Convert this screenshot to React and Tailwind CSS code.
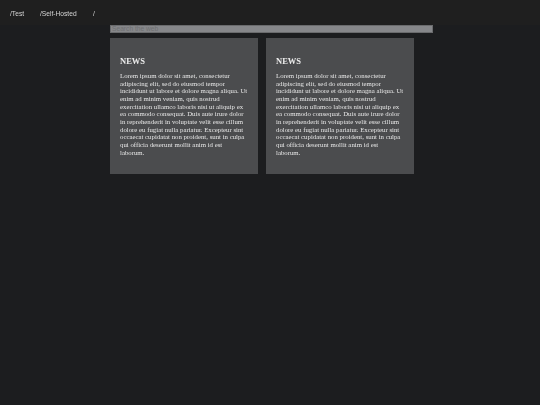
const lorem =
  'Lorem ipsum dolor sit amet, consectetur adipiscing elit, sed do eiusmod tempor incididunt ut labore et dolore magna aliqua. Ut enim ad minim veniam, quis nostrud exercitation ullamco laboris nisi ut aliquip ex ea commodo consequat. Duis aute irure dolor in reprehenderit in voluptate velit esse cillum dolore eu fugiat nulla pariatur. Excepteur sint occaecat cupidatat non proident, sunt in culpa qui officia deserunt mollit anim id est laborum.'

function NewsCard() {
  return (
    <div className="w-[148px] h-[136px] bg-[#4b4c4e] px-[10px] pt-[18px] font-['Liberation_Serif',serif]">
      <h2 className="text-[8.5px] leading-[10px] font-bold text-[#eeeeee] will-change-transform">NEWS</h2>
      <p className="mt-[6px] text-[6.8px] leading-[7.65px] text-[#e6e6e6] will-change-transform">{lorem}</p>
    </div>
  )
}

export default function App() {
  return (
    <div className="min-h-[405px] bg-[#1c1d1f]">
      <nav className="flex h-[25px] items-center gap-[16px] bg-[#1f1f1f] pl-[10px] pt-[2px] text-[6.67px] text-[#d4d4d4] font-['Liberation_Sans',sans-serif]">
        <a className="will-change-transform">/Test</a>
        <a className="will-change-transform">/Self-Hosted</a>
        <a className="will-change-transform">/</a>
      </nav>
      <div className="ml-[110px] w-[323px]">
        <input
          placeholder="Search the web"
          className="block h-[8px] w-full bg-[#86878a] border border-[#6a6b6d] px-px text-[6.67px] text-[#555555] placeholder:text-[#6f7072] font-['Liberation_Sans',sans-serif]"
        />
        <div className="mt-[5px] flex gap-[8px]">
          <NewsCard />
          <NewsCard />
        </div>
      </div>
    </div>
  )
}
